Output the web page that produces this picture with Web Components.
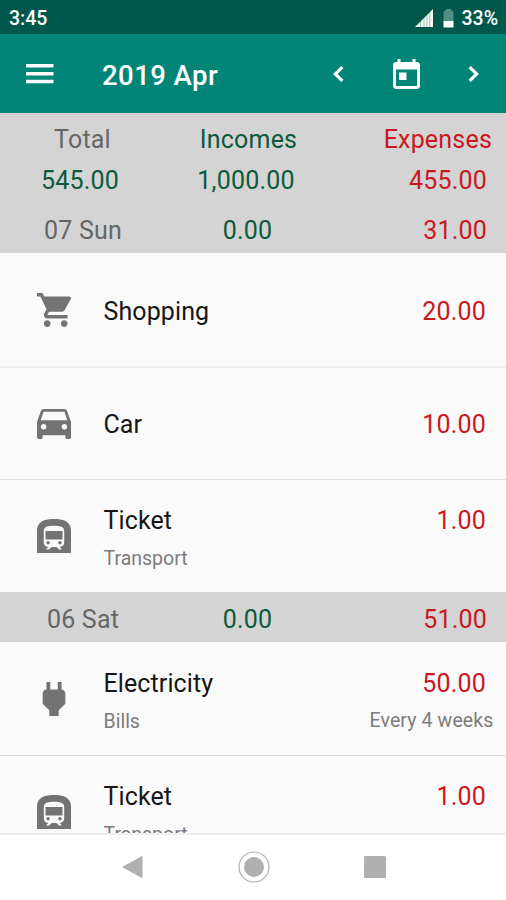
<!DOCTYPE html>
<html lang="en">
<head>
<meta charset="utf-8">
<title>2019 Apr</title>
<style>
  html, body { margin: 0; height: 100%; }
  body { font-family: Roboto, "Liberation Sans", sans-serif; background: #fafafa; overflow: hidden; }
  /* divider only between two neighbouring entries */
  entry-row + entry-row { --divider: #dedede; }
  day-head + entry-row + entry-row[icon="car"] { --divider: #ededed; --divider-width: 2px; }
</style>
</head>
<body>
<budget-app>
  <status-bar slot="top" time="3:45" battery="33%"></status-bar>
  <tool-bar slot="top">2019 Apr</tool-bar>
  <summary-head slot="top" total="545.00" incomes="1,000.00" expenses="455.00"></summary-head>

  <day-head income="0.00" expense="31.00">07 Sun</day-head>
  <entry-row icon="cart" amount="20.00">Shopping</entry-row>
  <entry-row icon="car" amount="10.00">Car</entry-row>
  <entry-row icon="subway" amount="1.00" category="Transport">Ticket</entry-row>
  <day-head income="0.00" expense="51.00">06 Sat</day-head>
  <entry-row icon="plug" amount="50.00" category="Bills" repeat="Every 4 weeks">Electricity</entry-row>
  <entry-row icon="subway" amount="1.00" category="Transport">Ticket</entry-row>

  <nav-bar slot="bottom"></nav-bar>
</budget-app>

<script>
// every icon carries its own viewBox so the glyph fills the box it is given
const ICONS = {
  cart: ["1 2 20 20", `<path d="M7 18c-1.1 0-1.99.9-1.99 2S5.9 22 7 22s2-.9 2-2-.9-2-2-2zM1 2v2h2l3.6 7.59-1.35 2.45c-.16.28-.25.61-.25.96 0 1.1.9 2 2 2h12v-2H7.42c-.14 0-.25-.11-.25-.25l.03-.12.9-1.63h7.45c.75 0 1.41-.41 1.75-1.03l3.58-6.49c.08-.14.12-.31.12-.48 0-.55-.45-1-1-1H5.21l-.94-2H1zm16 16c-1.1 0-1.99.9-1.99 2s.89 2 1.99 2 2-.9 2-2-.9-2-2-2z"/>`],
  car: ["3 4 18 18", `<path d="M18.92 6.01C18.72 5.42 18.16 5 17.5 5h-11c-.66 0-1.21.42-1.42 1.01L3 12v8c0 .55.45 1 1 1h1c.55 0 1-.45 1-1v-1h12v1c0 .55.45 1 1 1h1c.55 0 1-.45 1-1v-8l-2.08-5.99zM6.5 16c-.83 0-1.5-.67-1.5-1.5S5.67 13 6.5 13s1.5.67 1.5 1.5S7.33 16 6.5 16zm11 0c-.83 0-1.5-.67-1.5-1.5s.67-1.5 1.5-1.5 1.5.67 1.5 1.5-.67 1.5-1.5 1.5zM5 11l1.5-4.5h11L19 11H5z"/>`],
  subway: ["2 2 20 20", `<circle cx="8.5" cy="16" r="1"/><circle cx="15.5" cy="16" r="1"/><path d="M7.01 9h10v5h-10zM17.8 2.8C16 2.09 13.86 2 12 2c-1.86 0-4 .09-5.8.8C3.53 3.84 2 6.05 2 8.86V22h20V8.86c0-2.81-1.53-5.02-4.2-6.06zm.2 13.08c0 1.45-1.18 2.62-2.63 2.62l1.13 1.12V20H15l-1.5-1.5h-2.83L9.17 20H7.5v-.38l1.12-1.12C7.18 18.5 6 17.32 6 15.88V9c0-2.63 3-3 6-3 3.32 0 6 .38 6 3v6.88z"/>`],
  plug: ["3 3 18 18", `<path d="M16.01 7L16 3h-2v4h-4V3H8v4h-.01C7 6.99 6 7.99 6 8.99v5.49L9.5 18v3h5v-3l3.5-3.51v-5.5c0-1-1-2-1.99-1.99z"/>`]
};

class BudgetApp extends HTMLElement {
  constructor() {
    super();
    this.attachShadow({ mode: "open" }).innerHTML = `
      <style>
        :host { display: flex; flex-direction: column; height: 900px; width: 506px; }
        .list { flex: 1; min-height: 0; overflow: hidden; }
      </style>
      <slot name="top"></slot>
      <div class="list"><slot></slot></div>
      <slot name="bottom"></slot>
    `;
  }
}

class StatusBar extends HTMLElement {
  constructor() {
    super();
    this.attachShadow({ mode: "open" }).innerHTML = `
      <style>
        :host { display: flex; align-items: center; box-sizing: border-box; height: 34px; padding: 2px 8px 0 9px;
          background: #00574b; color: #fff; font-size: 19.5px; font-weight: 500; }
        .time { flex: 1; }
        svg { display: block; }
        .signal { margin-right: 10px; }
        .battery { margin-right: 7px; }
      </style>
      <span class="time">${this.getAttribute("time")}</span>
      <svg class="signal" width="18" height="18" viewBox="0 0 18 18">
        <path fill="#f3f8f0" d="M0 18L18 0v18z"/>
        <path stroke="#00574b" stroke-opacity=".4" stroke-width=".8" d="M5.5 12v6M9 8v10M12 5v13M14.8 3v15"/>
      </svg>
      <svg class="battery" width="11" height="19" viewBox="0 0 11 19">
        <path fill="#4f8e85" d="M3 0h5v1.5q2.5 0 2.5 2V12H.5V3.5q0-2 2.5-2z"/>
        <path fill="#fff" d="M.5 12h10v6.5H.5z"/>
      </svg>
      <span>${this.getAttribute("battery")}</span>
    `;
  }
}

class ToolBar extends HTMLElement {
  constructor() {
    super();
    this.attachShadow({ mode: "open" }).innerHTML = `
      <style>
        :host { display: flex; align-items: center; box-sizing: border-box; height: 79px; padding: 0 26px;
          background: #008577; color: #fff; }
        .title { flex: 1; margin-left: 21px; padding-top: 3px; font-size: 27.5px; font-weight: 500; letter-spacing: .45px; }
        svg { display: block; fill: #fff; }
        .prev, .today { margin-right: 48.5px; }
      </style>
      <svg width="55" height="20" viewBox="0 0 55 20"><path d="M0 0h27.5v3.5H0zM0 8h27.5v3.5H0zM0 15.8h27.5v3.5H0z"/></svg>
      <div class="title"><slot></slot></div>
      <svg class="prev" width="12" height="18" viewBox="0 0 12 18"><path d="M11.5 3.2L9.3 1 1 9l8.3 8 2.2-2.2L5.6 9z"/></svg>
      <svg class="today" width="27" height="30" viewBox="3 1 18 20"><path d="M19 3h-1V1h-2v2H8V1H6v2H5c-1.11 0-1.99.9-1.99 2L3 19c0 1.1.89 2 2 2h14c1.1 0 2-.9 2-2V5c0-1.1-.9-2-2-2zm0 16H5V8h14v11zM7 10h5v5H7z"/></svg>
      <svg class="next" width="12" height="18" viewBox="0 0 12 18"><path d="M.5 3.2L2.7 1 11 9l-8.3 8-2.2-2.2L6.4 9z"/></svg>
    `;
  }
}

class SummaryHead extends HTMLElement {
  constructor() {
    super();
    this.attachShadow({ mode: "open" }).innerHTML = `
      <style>
        :host { display: grid; grid-template-columns: 165px 167px 1fr; grid-template-rows: 41px 42px; box-sizing: border-box;
          height: 90px; padding-top: 6px; background: #d4d4d4; font-size: 25px; line-height: 42px; text-align: center; }
        .label { color: #666; letter-spacing: .2px; }
        .value { padding-right: 5px; letter-spacing: .2px; }
        .in { color: #0b5a3c; }
        .out { color: #c9191e; text-align: right; padding-right: 14px; }
        .value.out { padding-right: 19px; }
      </style>
      <span class="label">Total</span>
      <span class="label in">Incomes</span>
      <span class="label out">Expenses</span>
      <span class="value in">${this.getAttribute("total")}</span>
      <span class="value in">${this.getAttribute("incomes")}</span>
      <span class="value out">${this.getAttribute("expenses")}</span>
    `;
  }
}

class DayHead extends HTMLElement {
  constructor() {
    super();
    this.attachShadow({ mode: "open" }).innerHTML = `
      <style>
        :host { display: grid; grid-template-columns: 166px 166px 1fr; box-sizing: border-box; height: 50px; padding-top: 3px;
          background: #d4d4d4; font-size: 25px; line-height: 50px; letter-spacing: .2px; text-align: center; }
        .day { color: #666; }
        .in { color: #0b5a3c; padding-right: 3px; }
        .out { color: #c9191e; text-align: right; padding-right: 19px; }
      </style>
      <span class="day"><slot></slot></span>
      <span class="in">${this.getAttribute("income")}</span>
      <span class="out">${this.getAttribute("expense")}</span>
    `;
  }
}

class EntryRow extends HTMLElement {
  constructor() {
    super();
    const [box, shape] = ICONS[this.getAttribute("icon")];
    const category = this.getAttribute("category");
    const repeat = this.getAttribute("repeat");
    this.attachShadow({ mode: "open" }).innerHTML = `
      <style>
        :host { display: flex; align-items: center; box-sizing: border-box; height: 113px; padding-left: 37px;
          border-top: var(--divider-width, 1px) solid var(--divider, #fafafa); background: #fafafa; color: #161616; font-size: 25px; }
        svg { display: block; fill: #737373; margin-right: 32.5px; }
        .text { flex: 1; }
        .amount { text-align: right; }
        .main { line-height: 38px; padding-top: 3px; letter-spacing: .1px; }
        :host([category]) .main { padding-top: 6px; }
        .amount .main { color: #c9191e; padding-right: 20px; letter-spacing: .2px; }
        .sub { font-size: 19.5px; line-height: 36px; padding-top: 1px; color: #7c7c7c; }
        .amount .sub { padding-right: 12.5px; margin-top: -1px; margin-bottom: 1px; letter-spacing: .12px; }
      </style>
      <svg width="34" height="34" viewBox="${box}">${shape}</svg>
      <div class="text">
        <div class="main"><slot></slot></div>
        ${category ? `<div class="sub">${category}</div>` : ""}
      </div>
      <div class="amount">
        <div class="main">${this.getAttribute("amount")}</div>
        ${category ? `<div class="sub">${repeat || "&nbsp;"}</div>` : ""}
      </div>
    `;
  }
}

class NavBar extends HTMLElement {
  constructor() {
    super();
    this.attachShadow({ mode: "open" }).innerHTML = `
      <style>
        :host { display: flex; align-items: center; justify-content: center; gap: 94px; box-sizing: border-box;
          height: 67px; padding: 0 0 2px 1px; border-top: 2px solid #efefef; background: #fff; }
        svg { display: block; fill: #b0b0b0; }
      </style>
      <svg width="22" height="24" viewBox="0 0 22 24"><path d="M1 12L20 1.5v21z" stroke="#b0b0b0" stroke-linejoin="round"/></svg>
      <svg width="32" height="32" viewBox="0 0 32 32"><circle cx="16" cy="16" r="15" fill="none" stroke="#b0b0b0" stroke-width="1.2"/><circle cx="16" cy="16" r="10"/></svg>
      <svg width="22" height="22" viewBox="0 0 22 22"><rect width="22" height="22" rx="1.5"/></svg>
    `;
  }
}

customElements.define("budget-app", BudgetApp);
customElements.define("status-bar", StatusBar);
customElements.define("tool-bar", ToolBar);
customElements.define("summary-head", SummaryHead);
customElements.define("day-head", DayHead);
customElements.define("entry-row", EntryRow);
customElements.define("nav-bar", NavBar);
</script>
</body>
</html>
